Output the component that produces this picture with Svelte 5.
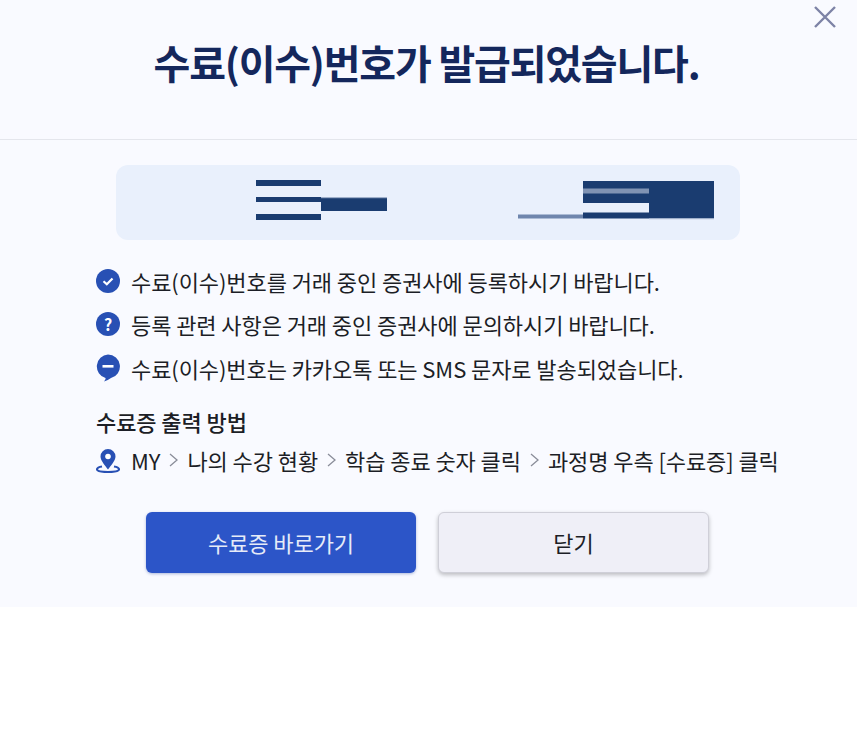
<script lang="ts">
  const notices = [
    { icon: 'check', text: '수료(이수)번호를 거래 중인 증권사에 등록하시기 바랍니다.' },
    { icon: 'question', text: '등록 관련 사항은 거래 중인 증권사에 문의하시기 바랍니다.' },
    { icon: 'talk', text: '수료(이수)번호는 카카오톡 또는 SMS 문자로 발송되었습니다.' }
  ];

  const steps = ['MY', '나의 수강 현황', '학습 종료 숫자 클릭', '과정명 우측 [수료증] 클릭'];
</script>

<div class="modal">
  <button class="close" aria-label="닫기">
    <svg width="26" height="26" viewBox="0 0 26 26" fill="none" stroke="#7d83a6" stroke-width="2.4">
      <path d="M3 3 L23 23 M23 3 L3 23" />
    </svg>
  </button>

  <header class="head">
    <h1>수료(이수)번호가 발급되었습니다.</h1>
  </header>

  <div class="body">
    <div class="banner">
      <!-- number placeholder blocks, offsets follow the banner's own box -->
      <svg width="624" height="75" viewBox="0 0 624 75">
        <g fill="#1a3c70">
          <rect x="140" y="15" width="65" height="6" />
          <rect x="140" y="32" width="65" height="5" />
          <rect x="140" y="49" width="65" height="6" />
          <rect x="205" y="33" width="66" height="13" />
          <rect x="467" y="16" width="66" height="22" />
          <rect x="467" y="47.5" width="66" height="6" />
          <rect x="533" y="16" width="65" height="37" />
        </g>
        <rect x="205" y="32" width="66" height="1.2" fill="#9fb0cb" />
        <rect x="467" y="23.5" width="66" height="5" fill="#8093b3" />
        <rect x="402" y="49.5" width="65" height="4" fill="#6f86ad" />
        <rect x="533" y="53" width="65" height="1.2" fill="#9fb0cb" />
      </svg>
    </div>

    <ul class="notices">
      {#each notices as item}
        <li>
          {#if item.icon === 'check'}
            <svg class="icon" width="24" height="24" viewBox="0 0 24 24">
              <circle cx="12" cy="12" r="12" fill="#2850b4" />
              <path d="M7.5 12.2 L10.8 15.2 L16.5 9.4" fill="none" stroke="#fff" stroke-width="2.2" />
            </svg>
          {:else if item.icon === 'question'}
            <span class="icon qmark">?</span>
          {:else}
            <svg class="icon" width="24" height="28" viewBox="0 0 24 28">
              <path d="M12 0.5 A12 12 0 0 1 15 24.1 Q11.5 26.8 8 27.5 Q10 25.5 9.5 24 A12 12 0 0 1 12 0.5 Z" fill="#2850b4" />
              <rect x="6.5" y="11" width="11" height="2.6" fill="#fff" />
            </svg>
          {/if}
          <span>{item.text}</span>
        </li>
      {/each}
    </ul>

    <h2>수료증 출력 방법</h2>
    <div class="path">
      <svg class="icon" width="24" height="24" viewBox="0 0 24 24">
        <path d="M6 17.5 C3 18 1 19 1 20.5 C1 22.3 6 23 12 23 C18 23 23 22.3 23 20.5 C23 19 21 18 18 17.5" fill="none" stroke="#2850b4" stroke-width="2.2" />
        <path d="M12 0 A7.5 7.5 0 0 1 19.5 7.5 C19.5 11.5 15 16.5 12 20.5 C9 16.5 4.5 11.5 4.5 7.5 A7.5 7.5 0 0 1 12 0 Z" fill="#2850b4" />
        <circle cx="12" cy="7.5" r="2.8" fill="#fff" />
      </svg>
      {#each steps as step, i}
        {#if i > 0}
          <svg class="chev" width="9" height="14" viewBox="0 0 9 14" fill="none" stroke="#8a8d99" stroke-width="1.3">
            <path d="M1 1 L8 7 L1 13" />
          </svg>
        {/if}
        <span>{step}</span>
      {/each}
    </div>

    <div class="actions">
      <button class="btn primary">수료증 바로가기</button>
      <button class="btn secondary">닫기</button>
    </div>
  </div>
</div>

<style>
  :global(body) {
    margin: 0;
    background: #fff;
  }

  .modal {
    position: relative;
    height: 607px;
    background: #f9faff;
    font-family: "Noto Sans CJK KR", "Noto Sans", sans-serif;
    color: #1c1e26;
  }

  .close {
    position: absolute;
    top: 4px;
    right: 19px;
    padding: 0;
    border: none;
    background: none;
    line-height: 0;
    cursor: pointer;
  }

  .head {
    height: 140px;
    box-sizing: border-box;
    border-bottom: 1px solid #e4e6ec;
    padding: 33px 4px 0 0;
    text-align: center;
  }

  h1 {
    margin: 0;
    font-size: 40px;
    line-height: 58px;
    font-weight: 700;
    letter-spacing: -1.2px;
    color: #14275c;
  }

  .body {
    padding: 25px 0 0 96px;
  }

  .banner {
    width: 624px;
    height: 75px;
    margin-left: 20px;
    border-radius: 12px;
    background: #e9f0fc;
    line-height: 0;
  }

  .notices {
    list-style: none;
    margin: 19px 0 0;
    padding: 0;
  }

  .notices li {
    display: flex;
    align-items: center;
    gap: 11px;
    height: 43.5px;
    font-size: 22px;
    letter-spacing: -0.08px;
  }

  .icon {
    flex-shrink: 0;
  }

  .qmark {
    display: flex;
    align-items: center;
    justify-content: center;
    width: 24px;
    height: 24px;
    border-radius: 50%;
    background: #2850b4;
    color: #fff;
    font-size: 16px;
    line-height: 24px;
    font-weight: 700;
  }

  h2 {
    margin: 15px 0 0;
    font-size: 22px;
    line-height: 32px;
    font-weight: 500;
    letter-spacing: -0.08px;
  }

  .path {
    display: flex;
    align-items: center;
    gap: 9px;
    height: 44px;
    margin-top: 1px;
    font-size: 22px;
    letter-spacing: -0.08px;
    white-space: nowrap;
  }

  .path .icon {
    margin: 3px 2px 0 0;
  }

  .actions {
    display: flex;
    gap: 22px;
    margin: 30px 0 0 50px;
  }

  .btn {
    height: 61px;
    box-sizing: border-box;
    border-radius: 6px;
    font-family: inherit;
    font-size: 22px;
    letter-spacing: -0.08px;
    cursor: pointer;
  }

  .primary {
    width: 270px;
    border: none;
    background: #2c55c8;
    color: #e6ebf8;
    box-shadow: 0 1px 3px rgba(30, 60, 150, 0.35);
  }

  .secondary {
    width: 271px;
    border: 1px solid #cfcfd8;
    background: #efeff7;
    color: #1c1e26;
    box-shadow: 0 2px 4px rgba(0, 0, 0, 0.25);
  }
</style>
